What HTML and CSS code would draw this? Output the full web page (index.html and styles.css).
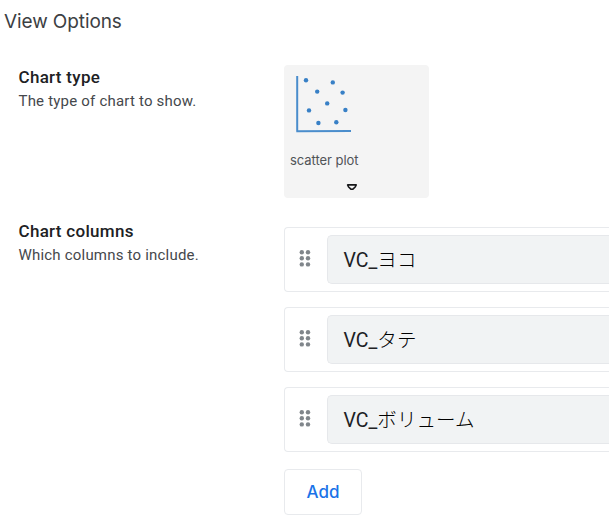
FILE: index.html
```html
<!DOCTYPE html>
<html lang="en">
<head>
<meta charset="utf-8">
<title>View Options</title>
<link rel="stylesheet" href="styles.css">
</head>
<body>
<svg width="0" height="0" class="defs"><defs>
<g id="grip"><circle cx="2.8" cy="2.2" r="2.2"/><circle cx="9" cy="2.2" r="2.2"/><circle cx="2.8" cy="8.3" r="2.2"/><circle cx="9" cy="8.3" r="2.2"/><circle cx="2.8" cy="14.4" r="2.2"/><circle cx="9" cy="14.4" r="2.2"/></g>
</defs></svg>
<h1 class="title">View Options</h1>
<section class="option option-type">
  <div class="label"><h2 class="type-name">Chart type</h2><p>The type of chart to show.</p></div>
  <div class="chart-card">
    <svg class="scatter" width="60" height="62" viewBox="0 0 60 62">
      <path d="M4.2 2V57.3M3.3 57.2L58 56.9" fill="none" stroke="#4a8dcc" stroke-width="2"/>
      <g fill="#3880c6"><circle cx="13" cy="6.3" r="2.2"/><circle cx="39.8" cy="8.4" r="2.2"/><circle cx="24.2" cy="17.6" r="2.2"/><circle cx="49.6" cy="18.6" r="2.2"/><circle cx="34.2" cy="29.4" r="2.2"/><circle cx="16" cy="36.4" r="2.2"/><circle cx="52.4" cy="36" r="2.2"/><circle cx="25.4" cy="49" r="2.2"/><circle cx="43.3" cy="48.3" r="2.2"/></g>
    </svg>
    <span class="chart-name">scatter plot</span>
    <svg class="arrow" width="12" height="8" viewBox="0 0 12 8"><path d="M1.6 1.9H10.2L9.2 4L6.9 6.2H4.9L2.6 4Z" fill="none" stroke="#161719" stroke-width="1.6" stroke-linejoin="round"/></svg>
  </div>
</section>
<section class="option option-columns">
  <div class="label"><h2>Chart columns</h2><p>Which columns to include.</p></div>
  <div class="columns">
    <div class="row"><svg class="grip" width="12" height="17"><use href="#grip"/></svg><div class="field">VC_<span class="kana">ヨコ</span></div></div>
    <div class="row"><svg class="grip" width="12" height="17"><use href="#grip"/></svg><div class="field">VC_<span class="kana">タテ</span></div></div>
    <div class="row"><svg class="grip" width="12" height="17"><use href="#grip"/></svg><div class="field">VC_<span class="kana">ボリューム</span></div></div>
    <button class="add">Add</button>
  </div>
</section>
</body>
</html>
```
FILE: styles.css
```css
* { box-sizing: border-box; }
body { margin: 0; height: 516px; overflow: hidden; background: #fff; font-family: Roboto, "Noto Sans CJK JP", sans-serif; color: #202124; }
.defs { display: block; }
h1, h2, p { margin: 0; }
.title { height: 65px; padding: 9px 0 0 4px; font: 400 19px/25px Inter, sans-serif; letter-spacing: -.1px; color: #3c4043; }
.option { display: flex; padding-left: 18px; }
.option-type { height: 162px; }
.label { width: 266px; flex: none; }
.option-columns .label { margin-top: -8px; }
h2 { font-size: 17px; line-height: 24px; font-weight: 500; letter-spacing: .3px; }
p { font-size: 15px; line-height: 24px; letter-spacing: .2px; color: #45484c; white-space: nowrap; }
h2, p { padding-left: .5px; }
.chart-card { display: flex; flex-direction: column; width: 145px; height: 133px; padding: 6px 0 0 6px; border-radius: 4px; background: #f4f4f4; }
.scatter { display: block; margin: 3px 0 0 3px; }
.chart-name { margin-top: 16px; font: 400 13px/17px Inter, sans-serif; letter-spacing: -.05px; color: #505357; white-space: nowrap; }
.arrow { display: block; margin: 14px 0 0 56px; }
.columns { flex: 1; min-width: 0; }
.row { display: flex; align-items: flex-start; height: 65px; margin-bottom: 15px; padding: 7px 0 0 14px; border: 1px solid #e8eaed; border-right: 0; border-radius: 4px 0 0 4px; }
.grip { margin-top: 15px; margin-right: 16px; fill: #80868b; }
.field { flex: 1; height: 49px; padding-left: 15.5px; border: 1px solid #e6e8eb; border-right: 0; border-radius: 5px 0 0 5px; background: #f1f3f4; font-size: 19.5px; line-height: 46px; white-space: nowrap; }
.kana { font-family: "Noto Sans CJK JP", sans-serif; font-weight: 300; color: #000; letter-spacing: .1px; }
.add { display: block; width: 78px; height: 46px; margin-top: 17px; padding: 0; border: 1px solid #e8eaed; border-radius: 4px; background: #fff; color: #1a73e8; font: 500 17px/44px Inter, sans-serif; }
```
